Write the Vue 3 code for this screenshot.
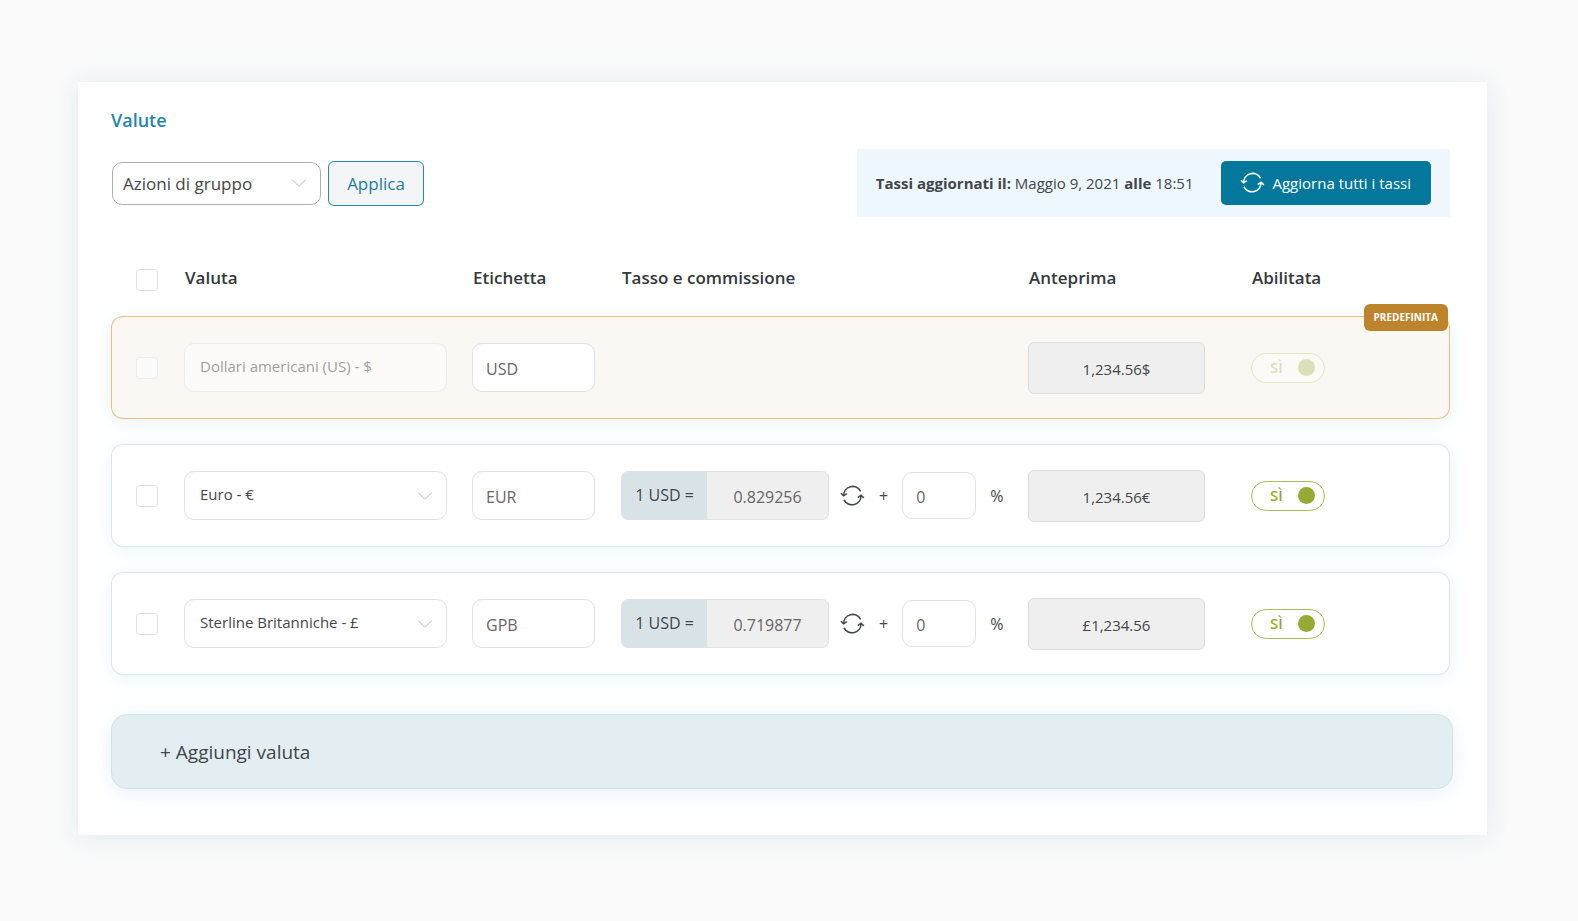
<script setup>
import { ref } from 'vue'

const groupAction = ref('Azioni di gruppo')
const allSelected = ref(false)

const currencyNames = [
  'Dollari americani (US) - $',
  'Euro - €',
  'Sterline Britanniche - £'
]

const currencies = ref([
  { name: 'Dollari americani (US) - $', label: 'USD', preview: '1,234.56$', isDefault: true, selected: false, enabled: true },
  { name: 'Euro - €', label: 'EUR', rate: '0.829256', fee: '0', preview: '1,234.56€', selected: false, enabled: true },
  { name: 'Sterline Britanniche - £', label: 'GPB', rate: '0.719877', fee: '0', preview: '£1,234.56', selected: false, enabled: true }
])

// select or deselect every row except the default one
function toggleAll(){
  currencies.value.forEach((item) => {
    if(!item.isDefault){
      item.selected = allSelected.value
    }
  })
}

function addCurrency(){
  currencies.value.push({ name: 'Euro - €', label: 'EUR', rate: '0.829256', fee: '0', preview: '1,234.56€', selected: false, enabled: true })
}
</script>

<template>
  <main class="panel">
    <h1 class="title">Valute</h1>

    <div class="toolbar">
      <form class="bulk" @submit.prevent>
        <div class="select-box bulk-select">
          <select v-model="groupAction" aria-label="Azioni di gruppo">
            <option>Azioni di gruppo</option>
          </select>
          <svg class="chevron" viewBox="0 0 16 10" aria-hidden="true"><path d="M1 1.5l7 6.5 7-6.5" /></svg>
        </div>
        <button type="submit" class="apply">Applica</button>
      </form>

      <div class="rates">
        <p><b>Tassi aggiornati il:</b> Maggio 9, 2021 <b>alle</b> 18:51</p>
        <button type="button" class="update">
          <svg class="sync" viewBox="0 0 24 24" aria-hidden="true">
            <path d="M2.6 11.6a9 9.2 0 0 1 17-4.2M20 11.4a9 9.2 0 0 1-17 4.4" />
            <path d="M0 9.2l2.6 2.6 3.2-2.2M16.8 13.6l3.2-2.4 2.8 2.6" />
          </svg>
          Aggiorna tutti i tassi
        </button>
      </div>
    </div>

    <table class="currencies">
      <colgroup>
        <col class="col-check">
        <col class="col-name">
        <col class="col-label">
        <col class="col-rate">
        <col class="col-preview">
        <col>
      </colgroup>
      <thead>
        <tr>
          <th class="check"><input v-model="allSelected" type="checkbox" aria-label="Seleziona tutto" @change="toggleAll"></th>
          <th>Valuta</th>
          <th>Etichetta</th>
          <th>Tasso e commissione</th>
          <th>Anteprima</th>
          <th>Abilitata</th>
        </tr>
      </thead>
      <tbody>
        <tr v-for="(item, i) in currencies" :key="i" :class="{ default: item.isDefault }">
          <td class="check">
            <input v-model="item.selected" type="checkbox" :disabled="item.isDefault" :aria-label="item.name">
          </td>
          <td>
            <div class="select-box">
              <select v-model="item.name" :disabled="item.isDefault" aria-label="Valuta">
                <option v-for="name in currencyNames" :key="name">{{ name }}</option>
              </select>
              <svg v-if="!item.isDefault" class="chevron" viewBox="0 0 16 10" aria-hidden="true"><path d="M1 1.5l7 6.5 7-6.5" /></svg>
            </div>
          </td>
          <td><input v-model="item.label" type="text" class="field" aria-label="Etichetta"></td>
          <td>
            <div v-if="!item.isDefault" class="rate">
              <label class="rate-group">
                <span>1 USD =</span>
                <input v-model="item.rate" type="text" readonly>
              </label>
              <button type="button" class="refresh" aria-label="Aggiorna tasso">
                <svg class="sync" viewBox="0 0 24 24" aria-hidden="true">
                  <path d="M2.6 11.6a9 9.2 0 0 1 17-4.2M20 11.4a9 9.2 0 0 1-17 4.4" />
                  <path d="M0 9.2l2.6 2.6 3.2-2.2M16.8 13.6l3.2-2.4 2.8 2.6" />
                </svg>
              </button>
              <span>+</span>
              <input v-model="item.fee" type="text" class="field fee" aria-label="Commissione">
              <span>%</span>
            </div>
          </td>
          <td><output class="preview">{{ item.preview }}</output></td>
          <td>
            <label class="toggle" :class="{ off: !item.enabled }">
              <input v-model="item.enabled" type="checkbox" :disabled="item.isDefault">
              <span>{{ item.enabled ? 'SÌ' : 'NO' }}</span>
              <i class="knob"></i>
            </label>
            <span v-if="item.isDefault" class="badge">PREDEFINITA</span>
          </td>
        </tr>
      </tbody>
    </table>

    <button type="button" class="add" @click="addCurrency">+ Aggiungi valuta</button>
  </main>
</template>

<style>
body {
  margin: 0;
  background: #fafafa;
}

#app {
  display: flow-root;
}
</style>

<style scoped>
.panel,
.panel * {
  box-sizing: border-box;
}

.panel {
  margin: 82px 91px 80px 78px;
  padding: 24px 34px 46px 33px;
  background: #fff;
  box-shadow: 0 2px 24px #dcecef;
  color: #434649;
  font-family: "Segoe UI", "Open Sans", "Noto Sans", sans-serif;
  font-size: 16px;
}

button,
input,
select {
  color: inherit;
  font: inherit;
}

button {
  cursor: pointer;
}

.title {
  margin: 0 0 15px;
  color: #1f86ad;
  font-size: 18px;
  font-weight: 600;
  line-height: 28px;
}

.toolbar {
  display: flex;
  justify-content: space-between;
  align-items: center;
  margin: 0 3px 27px 0;
}

.bulk {
  display: flex;
  align-items: center;
  gap: 7px;
  padding-left: 1px;
}

.select-box {
  position: relative;
  width: 263px;
}

.select-box select {
  display: block;
  width: 100%;
  height: 49px;
  padding: 0 40px 4px 15px;
  border: 1px solid #dfe1e2;
  border-radius: 10px;
  background: #fff;
  appearance: none;
  font-size: 15px;
}

.bulk-select {
  width: 209px;
}

.bulk-select select {
  height: 43px;
  padding: 0 40px 0 10px;
  border-color: #adb0b3;
  font-size: 17px;
}

.chevron {
  position: absolute;
  top: 50%;
  right: 14px;
  width: 16px;
  height: 10px;
  margin-top: -5px;
  fill: none;
  stroke: #d6d8da;
  stroke-width: 1.3;
  pointer-events: none;
}

.apply {
  width: 96px;
  height: 45px;
  padding: 0;
  border: 1px solid #2589b3;
  border-radius: 6px;
  background: #f3f5f6;
  color: #1b7ba3;
  font-size: 17px;
}

.rates {
  display: flex;
  align-items: center;
  gap: 28px;
  height: 68px;
  padding: 0 19px;
  background: #eff7fe;
  font-size: 15px;
}

.rates p {
  margin: 0;
}

.update {
  display: flex;
  align-items: center;
  gap: 7px;
  height: 44px;
  padding: 0 20px;
  border: 0;
  border-radius: 5px;
  background: #03789c;
  color: #fff;
}

.sync {
  display: block;
  width: 24px;
  height: 24px;
  overflow: visible;
  fill: none;
  stroke: currentColor;
  stroke-width: 1.6;
}

.currencies {
  width: calc(100% - 3px);
  border-spacing: 0 25px;
  table-layout: fixed;
}

.col-check {
  width: 73px;
}

.col-name {
  width: 288px;
}

.col-label {
  width: 149px;
}

.col-rate {
  width: 407px;
}

.col-preview {
  width: 223px;
}

th {
  height: 22px;
  padding: 0 0 0 1px;
  color: #34383c;
  font-size: 17px;
  font-weight: 600;
  line-height: 18px;
  text-align: left;
  vertical-align: top;
}

.check {
  padding-left: 25px;
}

.check input {
  display: block;
  width: 22px;
  height: 22px;
  margin: 0;
  border: 1px solid #dfe1e2;
  border-radius: 4px;
  background: #fff;
  appearance: none;
}

.check input:checked {
  background: #03789c;
}

tbody tr {
  border-radius: 12px;
  box-shadow: 0 3px 20px #e9f3fa;
}

td {
  position: relative;
  height: 103px;
  padding: 0;
  border: solid #dae7ec;
  border-width: 1px 0;
  background: #fff;
}

td:first-child {
  border-left-width: 1px;
  border-radius: 12px 0 0 12px;
}

td:last-child {
  border-right-width: 1px;
  border-radius: 0 12px 12px 0;
}

td.check {
  padding-left: 24px;
}

.default td {
  border-color: #ebbf7c;
  background: #fbf8f3;
}

.default .check input,
.default .select-box {
  opacity: 0.5;
}

.default .toggle {
  opacity: 0.3;
}

.default select {
  opacity: 1;
}

.field {
  display: block;
  width: 123px;
  height: 49px;
  padding: 2px 13px 0;
  border: 1px solid #dfe1e2;
  border-radius: 10px;
  background: #fff;
  color: #6b6468;
}

.rate {
  display: flex;
  align-items: center;
}

.rate-group {
  display: flex;
  width: 208px;
  height: 49px;
  overflow: hidden;
  border: 1px solid #dfe1e2;
  border-radius: 7px;
  background: #efefef;
}

.rate-group span {
  width: 85px;
  background: #d8e3e8;
  line-height: 47px;
  text-align: center;
}

.rate-group input {
  flex: 1;
  min-width: 0;
  padding: 2px 0 0;
  border: 0;
  background: none;
  color: #6b6468;
  text-align: center;
}

.refresh {
  margin: 0 14px 0 12px;
  padding: 0;
  border: 0;
  background: none;
}

.fee {
  width: 74px;
  height: 47px;
  margin: 0 14px;
}

.preview {
  display: block;
  width: 177px;
  height: 52px;
  border: 1px solid #dcdddd;
  border-radius: 6px;
  background: #efefef;
  font-size: 15px;
  line-height: 52px;
  text-align: center;
}

.toggle {
  display: flex;
  justify-content: space-between;
  align-items: center;
  width: 74px;
  height: 30px;
  padding: 0 9px 0 18px;
  border: 1px solid #a9bd58;
  border-radius: 15px;
  background: #fff;
  color: #97aa34;
  font-size: 15px;
  font-weight: 600;
  line-height: 26px;
}

.toggle span {
  padding-bottom: 2px;
}

.toggle input {
  position: absolute;
  opacity: 0;
}

.toggle.off {
  flex-direction: row-reverse;
  padding: 0 14px 0 9px;
}

.knob {
  width: 17px;
  height: 17px;
  border-radius: 50%;
  background: #97aa34;
}

.badge {
  position: absolute;
  top: -13px;
  right: 1px;
  padding: 0 10px;
  border-radius: 6px;
  background: #bd842b;
  color: #fff;
  font-size: 10px;
  font-weight: 700;
  line-height: 27px;
}

.add {
  display: block;
  width: 100%;
  height: 75px;
  margin-top: 14px;
  padding: 0 48px;
  border: 1px solid #d2e3e8;
  border-radius: 16px;
  background: #e3eef2;
  box-shadow: 0 4px 22px #e6f1f7;
  font-size: 19px;
  text-align: left;
}
</style>
